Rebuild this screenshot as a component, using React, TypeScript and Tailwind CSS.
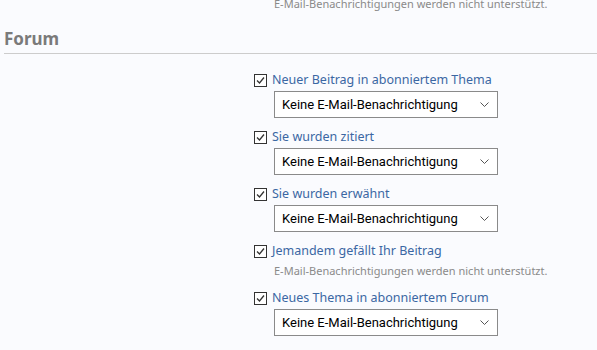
const rows = [
  { label: 'Neuer Beitrag in abonniertem Thema', select: true },
  { label: 'Sie wurden zitiert', select: true },
  { label: 'Sie wurden erwähnt', select: true },
  { label: 'Jemandem gefällt Ihr Beitrag', select: false },
  { label: 'Neues Thema in abonniertem Forum', select: true },
]

function Check() {
  return (
    <span className="w-[13px] h-[13px] border border-[#333] bg-white flex items-center justify-center shrink-0">
      <svg width="11" height="11" viewBox="0 0 11 11">
        <path d="M2 5.5 L4.5 8 L9 2.5" fill="none" stroke="#333" strokeWidth="1.3" />
      </svg>
    </span>
  )
}

function Select() {
  return (
    <div className="ml-[20px] mt-[2px] w-[224px] h-[27px] border border-[#8a8a8a] bg-white flex items-center justify-between pl-[7px] pr-[8px]">
      <span className="whitespace-nowrap text-[13px] text-black font-['Roboto',sans-serif]">Keine E-Mail-Benachrichtigung</span>
      <svg width="9" height="6" viewBox="0 0 9 6">
        <path d="M0.5 0.5 L4.5 4.5 L8.5 0.5" fill="none" stroke="#555" strokeWidth="1" />
      </svg>
    </div>
  )
}

export default function App() {
  return (
    <div className="w-[597px] h-[350px] bg-[#fafbfe] overflow-hidden font-['Noto_Sans',sans-serif]">
      <p className="pl-[274px] text-[11px] leading-[12px] text-[#8a8a8a] -mt-[2px] whitespace-nowrap">
        E-Mail-Benachrichtigungen werden nicht unterstützt.
      </p>
      <h2 className="mt-[18px] ml-[4px] text-[17px] leading-[22px] font-bold text-[#7a7a7a]">Forum</h2>
      <div className="mt-[3px] ml-[4px] border-t border-[#cccccc]" />
      <div className="pl-[254px] pt-[17px] flex flex-col gap-[10px]">
        {rows.map((r) => (
          <div key={r.label}>
            <div className="flex items-center gap-[5px] h-[18px]">
              <Check />
              <span className="whitespace-nowrap text-[12.5px] text-[#3b67a3]">{r.label}</span>
            </div>
            {r.select ? (
              <Select />
            ) : (
              <p className="ml-[20px] mt-[3px] text-[11px] leading-[16px] text-[#8a8a8a] whitespace-nowrap">
                E-Mail-Benachrichtigungen werden nicht unterstützt.
              </p>
            )}
          </div>
        ))}
      </div>
    </div>
  )
}
